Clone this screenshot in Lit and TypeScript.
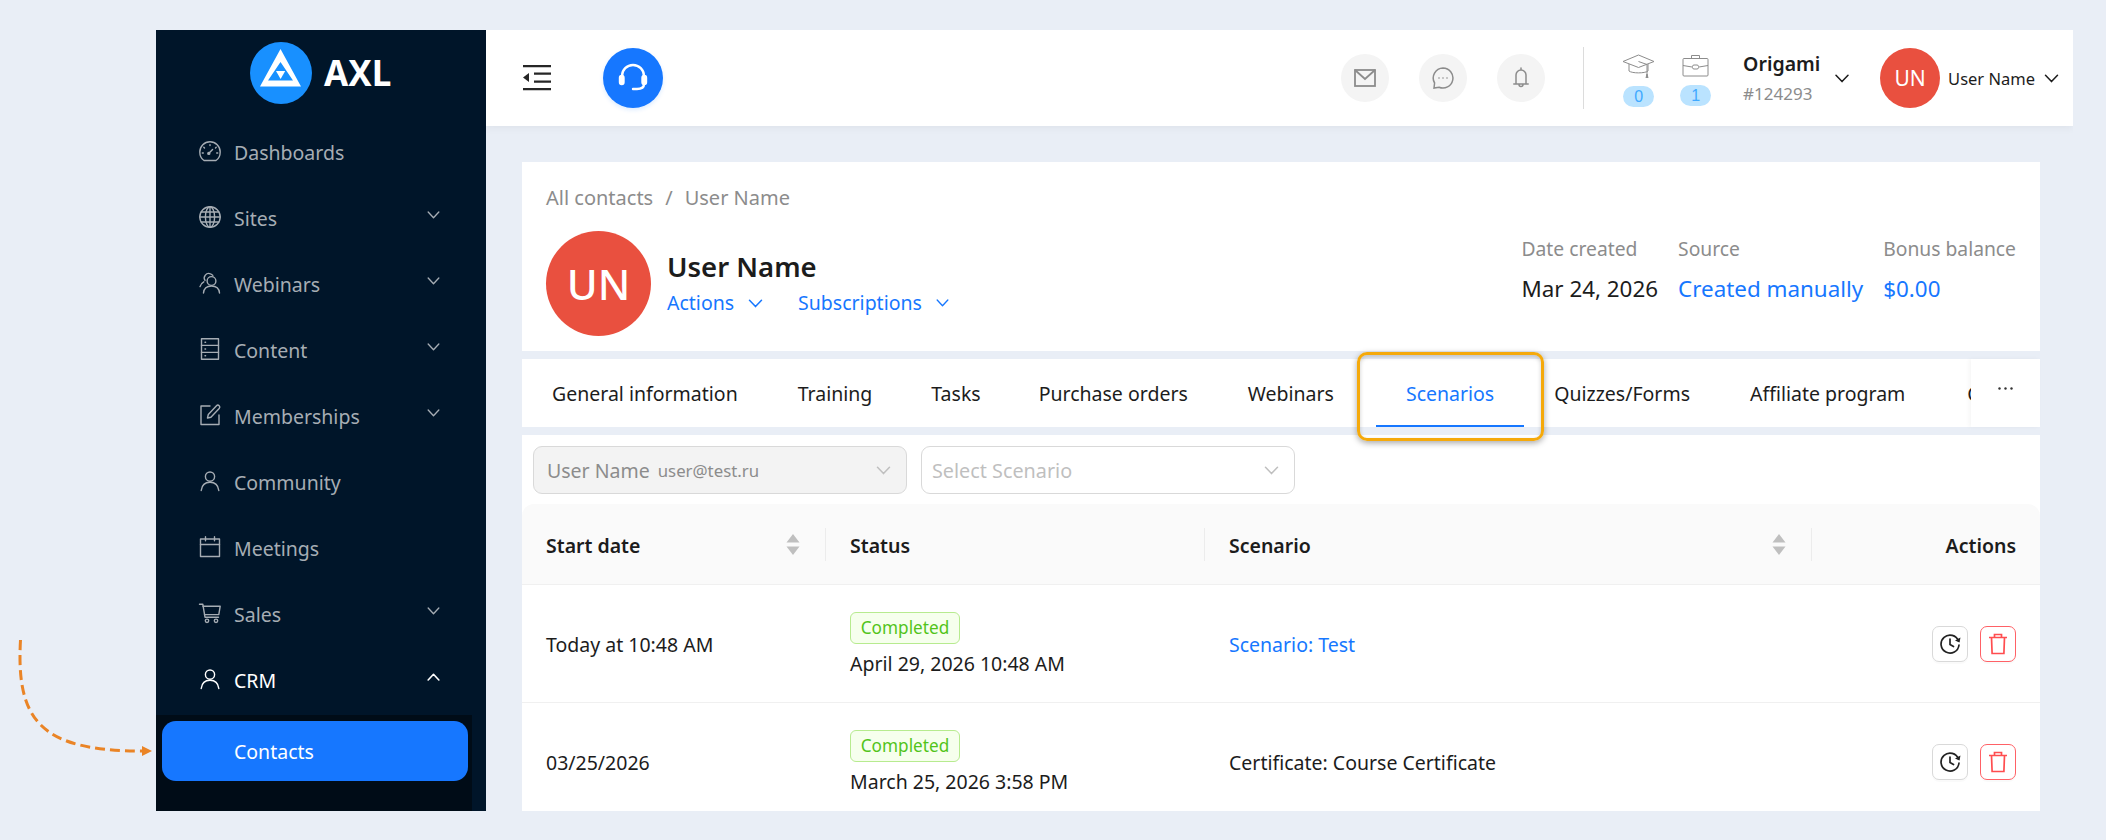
import { LitElement, html, css, svg, nothing } from 'lit';
import { customElement } from 'lit/decorators.js';

const icon = (body: unknown, size = 24) => html`<svg class="ico" width=${size} height=${size} viewBox="0 0 24 24" fill="none" stroke="currentColor" stroke-width="1.4" stroke-linecap="round" stroke-linejoin="round">${body}</svg>`;

const chevronDown = (w = 14) => html`<svg class="chev" width=${w} height=${Math.round(w * 0.62)} viewBox="0 0 14 9" fill="none" stroke="currentColor" stroke-width="1.5" stroke-linecap="round" stroke-linejoin="round"><path d="M1 1.2 7 7.6l6-6.4"/></svg>`;

const personIcon = svg`<circle cx="12" cy="7.6" r="4.6"/><path d="M3.2 21.5c.6-5 4-8.2 8.8-8.2s8.2 3.2 8.8 8.2"/>`;

const navItems = [
  { label: 'Dashboards', icon: svg`<path d="M6 21.5h12c2.6-1.7 4.2-4.8 4.2-8.5A10.2 10.2 0 0 0 1.8 13c0 3.7 1.6 6.800 4.200 8.500z"/><path d="m10.600 14.600 4-4.200"/><circle cx="10.800" cy="14.400" r="1"/><path d="M12 5.600v1M5.800 8.200l.7.7M18.200 8.200l-.7.7M4.300 14h1M18.700 14h1"/>` },
  { label: 'Sites', arrow: true, icon: svg`<circle cx="12" cy="12" r="10.200"/><ellipse cx="12" cy="12" rx="4.600" ry="10.200"/><path d="M12 1.800v20.400M1.800 12h20.400M3.200 7h17.600M3.200 17h17.600"/>` },
  { label: 'Webinars', arrow: true, icon: svg`<circle cx="13.500" cy="10" r="4.400"/><path d="M5.500 22c.4-4.300 3.500-7 8-7s7.600 2.700 8 7"/><path d="M7 9.400a4.500 4.500 0 0 1 5.500-6.600c1 .3 1.700.9 2.300 1.600"/><path d="M2 15.600c.5-2 1.800-3.700 3.800-4.800"/>` },
  { label: 'Content', arrow: true, icon: svg`<rect x="3.500" y="1.800" width="17" height="20.400"/><path d="M3.500 8.400h17M3.500 15.400h17"/><path d="M7 5.200h.6M7 12h.6M7 18.800h.6"/>` },
  { label: 'Memberships', arrow: true, icon: svg`<path d="M12 3H3v18.500h18V12"/><path d="m9.500 15 .8-3.500 8.200-8.700a1.800 1.800 0 0 1 2.700 2.600l-8.300 8.800z"/>` },
  { label: 'Community', icon: personIcon },
  { label: 'Meetings', icon: svg`<rect x="2.500" y="4" width="19" height="17.500"/><path d="M2.500 9.500h19M7.500 1.800v4M16.500 1.800v4"/>` },
  { label: 'Sales', arrow: true, icon: svg`<path d="M1.500 3.200h3.300l2.200 13h13.500"/><path d="M5 5.200h17.200l-1.400 8.400H6.500"/><circle cx="9" cy="19.800" r="1.700"/><circle cx="18" cy="19.800" r="1.700"/>` },
];

const rows = [
  { start: 'Today at 10:48 AM', done: 'April 29, 2026 10:48 AM', scenario: 'Scenario: Test', link: true },
  { start: '03/25/2026', done: 'March 25, 2026 3:58 PM', scenario: 'Certificate: Course Certificate', link: false },
];

// trim: small per-tab correction so the labels land where they do in the app
const tabs = [
  { label: 'General information', trim: 0 },
  { label: 'Training', trim: -1 },
  { label: 'Tasks', trim: -2 },
  { label: 'Purchase orders', trim: 0 },
  { label: 'Webinars', trim: 12 },
  { label: 'Scenarios', trim: 0 },
  { label: 'Quizzes/Forms', trim: 0 },
  { label: 'Affiliate program', trim: 2 },
  { label: 'Certificates', trim: 0 },
];

@customElement('app-root')
export class AppRoot extends LitElement {
  static styles = css`
    :host {
      display: block;
      position: relative;
      width: 2106px;
      height: 840px;
      overflow: hidden;
      background: #e9eef6;
      font-family: "Noto Sans", "Open Sans", sans-serif;
      color: #1c1c1c;
    }
    svg { display: block; flex: none; }

    .shell { display: flex; width: 1917px; height: 781px; margin: 30px 0 0 156px; overflow: hidden; }

    .sidebar { flex: none; width: 330px; height: 781px; background: #001529; color: #a6adb4; overflow: hidden; }
    .logo { display: flex; align-items: center; height: 89px; padding-left: 94px; box-sizing: border-box; gap: 12px; padding-bottom: 4px; }
    .logo span { font-size: 35px; font-weight: 700; color: #fff; line-height: 1; }
    .nav-item { display: flex; align-items: center; height: 66px; padding: 0 46px 0 42px; gap: 12px; font-size: 19.500px; }
    .nav-item .ico { margin-top: -3px; }
    .nav-item .chev { margin: -6px 0 0 auto; }
    .nav-item.open { color: #fff; }
    .sub { margin-top: 2px; width: 316px; height: 96px; background: #000c17; padding: 6px 0 0 6px; box-sizing: border-box; }
    .sub-item { display: flex; align-items: center; width: 306px; height: 60px; border-radius: 14px; background: #1677ff; color: #fff; font-size: 19.500px; padding-left: 72px; box-sizing: border-box; }

    .main { flex: none; width: 1587px; }
    .topbar { display: flex; align-items: center; height: 96px; background: #fff; box-shadow: 0 2px 8px rgba(0, 0, 0, .05); padding: 0 14px 0 36px; box-sizing: border-box; }
    .support { display: flex; align-items: center; justify-content: center; width: 60px; height: 60px; border-radius: 50%; background: #1677ff; color: #fff; margin-left: 51px; box-shadow: 0 2px 4px rgba(22, 119, 255, .15); }
    .top-right { display: flex; align-items: center; margin-left: auto; }
    .round { display: flex; align-items: center; justify-content: center; width: 48px; height: 48px; border-radius: 50%; background: #f4f4f4; color: #8c8c8c; margin-right: 30px; }
    .vline { width: 1px; height: 62px; background: #dcdcdc; margin: 0 38px 0 8px; }
    .stat { display: flex; flex-direction: column; align-items: center; width: 33px; margin-right: 24px; color: #8c8c8c; padding-top: 4px; }
    .stat b { width: 31px; height: 21px; margin-top: 8px; border-radius: 11px; background: #bae3ff; color: #40a9ff; font: 400 16px/21px "Liberation Sans", sans-serif; text-align: center; }
    .org { margin-left: 7px; width: 92px; }
    .org strong { display: block; font-size: 19.500px; font-weight: 600; line-height: 26px; }
    .org small { display: block; font-size: 17px; line-height: 22px; margin-top: 6px; color: #8c8c8c; }
    .top-right > .chev { color: #1c1c1c; }
    .avatar-sm { display: flex; align-items: center; justify-content: center; width: 60px; height: 60px; margin: 0 8px 0 31px; border-radius: 50%; background: #e9503f; color: #fff; font-size: 21px; }
    .uname { font-size: 16.500px; margin-right: 9px; }

    .content { display: flex; flex-direction: column; gap: 8px; width: 1518px; margin: 36px 0 0 36px; }
    .card { height: 189px; background: #fff; padding: 25px 24px 0; box-sizing: border-box; }
    .crumbs { font-size: 20px; line-height: 22px; color: #8c8c8c; display: flex; gap: 12px; }
    .profile { display: flex; justify-content: space-between; margin-top: 22px; }
    .who { display: flex; gap: 16px; }
    .avatar { display: flex; align-items: center; justify-content: center; width: 105px; height: 105px; border-radius: 50%; background: #e9503f; color: #fff; font-size: 42px; font-weight: 500; }
    .who h1 { margin: 18px 0 0; font-size: 27.500px; line-height: 36px; font-weight: 600; }
    .links { display: flex; margin-top: 6px; font-size: 19.500px; line-height: 24px; color: #1677ff; }
    .links span { display: flex; align-items: center; gap: 14px; margin-right: 35px; }
    .facts { display: flex; gap: 20px; padding-top: 6px; }
    .facts label { display: block; font-size: 19.300px; line-height: 24px; color: #8c8c8c; }
    .facts p { margin: 14px 0 0; font-size: 22.400px; line-height: 28px; }
    .blue { color: #1677ff; }

    .tabs { position: relative; display: flex; height: 68px; background: #fff; }
    .tab-list { display: flex; flex: none; width: 1449px; overflow: hidden; }
    .tab { position: relative; flex: none; padding: 0 30px; font-size: 19.500px; line-height: 70px; white-space: nowrap; }
    .tab.active { color: #1677ff; }
    .tab.active::after { content: ""; position: absolute; left: 0; right: 0; bottom: -1px; height: 3px; background: #1677ff; }
    .more { display: flex; justify-content: center; padding: 28px 0 0 0; flex: 1; box-sizing: border-box; box-shadow: -2px 0 4px rgba(0, 0, 0, .04); color: #333; }
    .mark { position: absolute; left: 835px; top: -7px; width: 187px; height: 89px; box-sizing: border-box; border: 3px solid #f5a90a; border-radius: 10px; box-shadow: 0 2px 6px rgba(0, 0, 0, .35), inset 0 2px 4px rgba(0, 0, 0, .2); }

    .panel { height: 376px; background: #fff; overflow: hidden; }
    .filters { display: flex; gap: 14px; padding: 11px 0 0 11px; height: 69px; box-sizing: border-box; }
    .select { display: flex; align-items: center; width: 374px; height: 48px; box-sizing: border-box; border: 1px solid #d9d9d9; border-radius: 9px; padding: 0 15px 0 10px; font-size: 19.800px; color: #bfbfbf; background: #fff; }
    .select.off { background: #f3f3f3; color: #8c8c8c; padding-left: 13px; font-size: 19.500px; }
    .select small { font-size: 16.800px; margin-left: 8px; }
    .select .chev { margin-left: auto; color: #bfbfbf; }

    .row { display: grid; grid-template-columns: 303px 379px 607px 229px; }
    .row > div { display: flex; align-items: center; padding: 2px 24px 0; box-sizing: border-box; min-width: 0; font-size: 19.500px; }
    .row > div:nth-child(2), .row > div:nth-child(3) { padding-left: 25px; }
    .head { height: 81px; background: #fafafa; border-radius: 12px 12px 0 0; border-bottom: 1px solid #f0f0f0; box-sizing: border-box; }
    .head > div { position: relative; font-weight: 600; }
    .head > div + div::before { content: ""; position: absolute; left: 0; top: 24px; width: 1px; height: 33px; background: #ececec; }
    .head .caret { position: absolute; right: 25px; top: 29px; }
    .body { height: 118px; border-bottom: 1px solid #f0f0f0; box-sizing: border-box; }
    .row > div.status { flex-direction: column; align-items: flex-start; justify-content: center; }
    .tag { display: block; width: 110px; height: 32px; box-sizing: border-box; border: 1px solid #b7eb8f; border-radius: 6px; background: #f6ffed; color: #52c41a; font-size: 17.200px; line-height: 29px; text-align: center; margin-bottom: 6px; }
    .row > div.acts { justify-content: flex-end; gap: 12px; padding-top: 0; }
    .btn { display: flex; align-items: center; justify-content: center; width: 36px; height: 36px; box-sizing: border-box; border: 1px solid #d9d9d9; border-radius: 7px; background: #fff; color: #222; box-shadow: 0 2px 0 rgba(0, 0, 0, .02); }
    .btn.del { border-color: #ff6166; color: #ff4d4f; }

    .pointer { position: absolute; left: 0; top: 620px; }
  `;

  private caret() {
    return html`<svg class="caret" width="14" height="23" viewBox="0 0 14 23" fill="#bfbfbf"><path d="M7 1 13.500 9.500H.5zM7 22 .5 13.500h13z"/></svg>`;
  }

  render() {
    return html`
      <div class="shell">
        <aside class="sidebar">
          <div class="logo">
            <svg width="62" height="62" viewBox="0 0 62 62">
              <circle cx="31" cy="31" r="31" fill="#1890ff"/>
              <path fill="#fff" fill-rule="evenodd" d="M30.500 7 51 44.500H10zM30.500 20 18 38.500h25z"/>
              <path fill="#fff" d="M26 29h9.200l-4.600 8z"/>
            </svg>
            <span>AXL</span>
          </div>
          ${navItems.map(n => html`
            <div class="nav-item">
              ${icon(n.icon)}
              <span>${n.label}</span>
              ${n.arrow ? chevronDown(13) : nothing}
            </div>`)}
          <div class="nav-item open">
            ${icon(personIcon)}
            <span>CRM</span>
            <svg class="chev" width="13" height="8" viewBox="0 0 14 9" fill="none" stroke="currentColor" stroke-width="1.800" stroke-linecap="round" stroke-linejoin="round"><path d="M1 7.800 7 1.400l6 6.400"/></svg>
          </div>
          <div class="sub"><div class="sub-item">Contacts</div></div>
        </aside>

        <div class="main">
          <header class="topbar">
            <svg width="30" height="26" viewBox="0 0 30 26" fill="#262626"><path d="M1 0h28v2.200H1zM12 7.500h17v2.200H12zM12 15.500h17v2.200H12zM1 23h28v2.200H1z"/><path d="M1 12.500 7 8v9z"/></svg>
            <div class="support">
              <svg width="32" height="32" viewBox="0 0 32 32" fill="none" stroke="#fff" stroke-width="2.400" stroke-linecap="round"><path d="M5 18v-4a11 11 0 0 1 22 0v4"/><rect x="3" y="14" width="3.500" height="8" rx="1.700" fill="#fff"/><rect x="25.500" y="14" width="3.500" height="8" rx="1.700" fill="#fff"/><path d="M27 22c0 3.600-3 5-7 5h-4"/></svg>
            </div>
            <div class="top-right">
              <div class="round"><svg width="22" height="18" viewBox="0 0 22 18" fill="none" stroke="currentColor" stroke-width="1.800"><rect x="1" y="1" width="20" height="16"/><path d="m1 1 10 9 10-9"/></svg></div>
              <div class="round"><svg width="22" height="22" viewBox="0 0 22 22" fill="none" stroke="currentColor" stroke-width="1.500"><path d="M11 1a10 10 0 1 1-4 19.200L2 21l.6-5A10 10 0 0 1 11 1z"/><circle cx="7" cy="11" r=".8" fill="currentColor" stroke="none"/><circle cx="11" cy="11" r=".8" fill="currentColor" stroke="none"/><circle cx="15" cy="11" r=".8" fill="currentColor" stroke="none"/></svg></div>
              <div class="round"><svg width="16" height="22" viewBox="0 0 16 22" fill="none" stroke="currentColor" stroke-width="1.500" stroke-linecap="round"><path d="M8 1v2M3 16.500V8a5 5 0 0 1 10 0v8.500M.8 17h14.400M6 17.500a2 2 0 0 0 4 0"/></svg></div>
              <div class="vline"></div>
              <div class="stat">
                <svg width="33" height="24" viewBox="0 0 33 24" fill="none" stroke="currentColor" stroke-width="1"><path d="M16.500 1 32 7.500l-15.500 6L1 7.500z"/><path d="M7 10v7c3 2.500 16 2.500 19 0v-7M16.500 7.500 25 10.500V23"/><path d="M24 24h2l-1-4z" fill="currentColor"/></svg>
                <b>0</b>
              </div>
              <div class="stat">
                <svg width="27" height="23" viewBox="0 0 27 23" fill="none" stroke="currentColor" stroke-width="1"><rect x="1" y="4.500" width="25" height="17.500" rx="1"/><path d="M9.500 4.500V1.500h8v3M1 11.500l9 1.500M26 11.500l-9 1.500"/><rect x="10.500" y="11" width="6" height="4" rx="1.500"/></svg>
                <b>1</b>
              </div>
              <div class="org"><strong>Origami</strong><small>#124293</small></div>
              ${chevronDown(14)}
              <div class="avatar-sm">UN</div>
              <span class="uname">User Name</span>
              ${chevronDown(15)}
            </div>
          </header>

          <div class="content">
            <section class="card">
              <div class="crumbs"><span>All contacts</span><span>/</span><span>User Name</span></div>
              <div class="profile">
                <div class="who">
                  <div class="avatar">UN</div>
                  <div>
                    <h1>User Name</h1>
                    <div class="links">
                      <span>Actions ${chevronDown(15)}</span>
                      <span>Subscriptions ${chevronDown(13)}</span>
                    </div>
                  </div>
                </div>
                <div class="facts">
                  <div><label>Date created</label><p>Mar 24, 2026</p></div>
                  <div><label>Source</label><p class="blue">Created manually</p></div>
                  <div><label>Bonus balance</label><p class="blue">$0.00</p></div>
                </div>
              </div>
            </section>

            <nav class="tabs">
              <div class="tab-list">
                ${tabs.map(t => html`<div class="tab ${t.label === 'Scenarios' ? 'active' : ''}" style="margin-right:${t.trim}px">${t.label}</div>`)}
              </div>
              <div class="more"><svg width="15" height="3" viewBox="0 0 15 3" fill="currentColor"><circle cx="1.500" cy="1.500" r="1.200"/><circle cx="7.500" cy="1.500" r="1.200"/><circle cx="13.500" cy="1.500" r="1.200"/></svg></div>
              <div class="mark"></div>
            </nav>

            <section class="panel">
              <div class="filters">
                <div class="select off"><span>User Name</span><small>user@test.ru</small>${chevronDown(15)}</div>
                <div class="select"><span>Select Scenario</span>${chevronDown(15)}</div>
              </div>
              <div class="row head">
                <div>Start date${this.caret()}</div>
                <div>Status</div>
                <div>Scenario${this.caret()}</div>
                <div style="justify-content:flex-end">Actions</div>
              </div>
              ${rows.map(r => html`
                <div class="row body">
                  <div>${r.start}</div>
                  <div class="status"><span class="tag">Completed</span><span>${r.done}</span></div>
                  <div class=${r.link ? 'blue' : ''}>${r.scenario}</div>
                  <div class="acts">
                    <span class="btn"><svg width="22" height="22" viewBox="0 0 22 22" fill="none" stroke="currentColor" stroke-width="1.700" stroke-linecap="round"><path d="M19.500 8A9 9 0 1 0 20 12"/><path d="M11 6v5.500l3.500 2"/><path d="M21.500 4.500 20.500 9.500l-4.500-2z" fill="currentColor" stroke="none"/></svg></span>
                    <span class="btn del"><svg width="20" height="22" viewBox="0 0 20 22" fill="none" stroke="currentColor" stroke-width="1.700"><path d="M1 4.500h18M3.500 4.500l.6 16h11.800l.6-16M6.500 4.500V1.500h7v3"/></svg></span>
                  </div>
                </div>`)}
            </section>
          </div>
        </div>
      </div>

      <svg class="pointer" width="156" height="140" viewBox="0 0 156 140" fill="none">
        <path d="M20.500 20C16 100 40 131 142 131" stroke="#ea8426" stroke-width="3" stroke-dasharray="10 5"/>
        <path d="M152 131 142 126v10z" fill="#ea8426"/>
      </svg>
    `;
  }
}
